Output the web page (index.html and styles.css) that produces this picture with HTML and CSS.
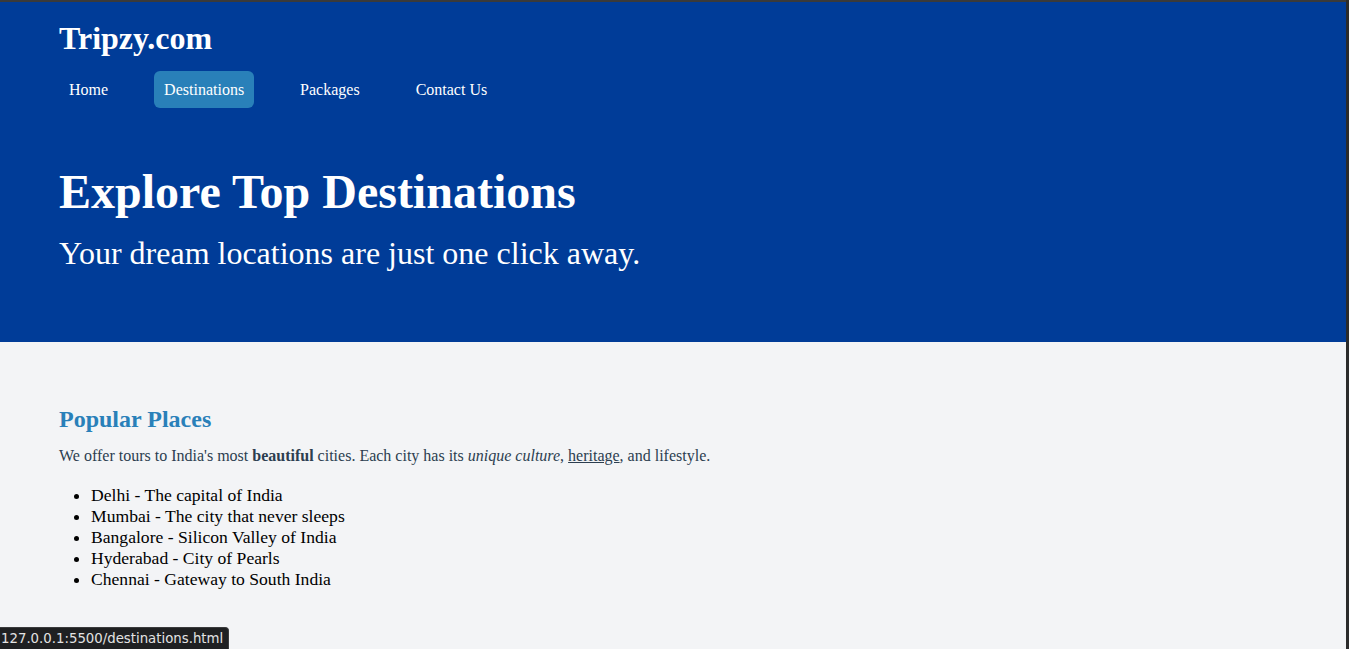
FILE: index.html
```html
<!DOCTYPE html>
<html lang="en">
<head>
<meta charset="utf-8">
<title>Destinations - Tripzy.com</title>
<link rel="stylesheet" href="styles.css">
</head>
<body>
<header class="site-header">
  <h1 class="logo">Tripzy.com</h1>
  <nav class="nav">
    <a class="nav-link" href="#">Home</a>
    <a class="nav-link active" href="#">Destinations</a>
    <a class="nav-link" href="#">Packages</a>
    <a class="nav-link" href="#">Contact Us</a>
  </nav>
  <section class="hero">
    <h2 class="hero-title">Explore Top Destinations</h2>
    <p class="hero-sub">Your dream locations are just one click away.</p>
  </section>
</header>
<main class="content">
  <h2 class="section-title">Popular Places</h2>
  <p class="intro">We offer tours to India's most <strong>beautiful</strong> cities. Each city has its <em>unique culture</em>, <u>heritage</u>, and lifestyle.</p>
  <ul class="places">
    <li>Delhi - The capital of India</li>
    <li>Mumbai - The city that never sleeps</li>
    <li>Bangalore - Silicon Valley of India</li>
    <li>Hyderabad - City of Pearls</li>
    <li>Chennai - Gateway to South India</li>
  </ul>
</main>
<div class="frame-top"></div>
<div class="frame-right"></div>
<div class="status-bar">127.0.0.1:5500/destinations.html</div>
</body>
</html>
```
FILE: styles.css
```css
html, body {
  margin: 0;
  padding: 0;
}
body {
  background: #f3f4f6;
  font-family: "Liberation Serif", "Times New Roman", serif;
  min-height: 649px;
}
.site-header {
  background: #003c98;
  color: #fff;
  padding: 20px 59px 0 59px;
  height: 322px;
}
.logo {
  margin: 0;
  font-size: 32px;
  font-weight: bold;
  line-height: normal;
}
.nav {
  display: flex;
  gap: 36px;
  margin-top: 14px;
}
.nav-link {
  color: #fff;
  text-decoration: none;
  font-size: 16px;
  line-height: 18px;
  padding: 10px 10px 9px 10px;
  border-radius: 6px;
}
.nav-link.active {
  background: #2980b9;
}
.hero {
  padding-top: 56px;
}
.hero-title {
  margin: 0;
  font-size: 48px;
  font-weight: bold;
  line-height: normal;
}
.hero-sub {
  margin: 16px 0 0 0;
  font-size: 32px;
  line-height: normal;
}
.content {
  padding: 64px 59px 40px 59px;
}
.section-title {
  margin: 0;
  color: #2980b9;
  font-size: 24px;
  font-weight: bold;
  line-height: normal;
}
.intro {
  margin: 14px 0 0 0;
  color: #2c3e50;
  font-size: 16px;
  line-height: normal;
}
.places {
  margin: 20px 0 0 0;
  padding-left: 32px;
  font-size: 17.6px;
  line-height: 21px;
  color: #000;
}
.frame-top {
  position: fixed;
  top: 0;
  left: 0;
  right: 0;
  height: 2px;
  background: #3a3a3a;
}
.frame-right {
  position: fixed;
  top: 0;
  right: 0;
  bottom: 0;
  width: 3px;
  background: #2b2b2b;
}
.status-bar {
  position: fixed;
  left: 0;
  bottom: 0;
  height: 22px;
  box-sizing: border-box;
  padding: 0 5px 0 1px;
  background: #1f2022;
  border: 1px solid #3a3b3d;
  border-left: none;
  border-bottom: none;
  border-top-right-radius: 4px;
  color: #e3e3e3;
  font-family: "DejaVu Sans", sans-serif;
  font-size: 13.3px;
  line-height: 21px;
  white-space: nowrap;
}
```
